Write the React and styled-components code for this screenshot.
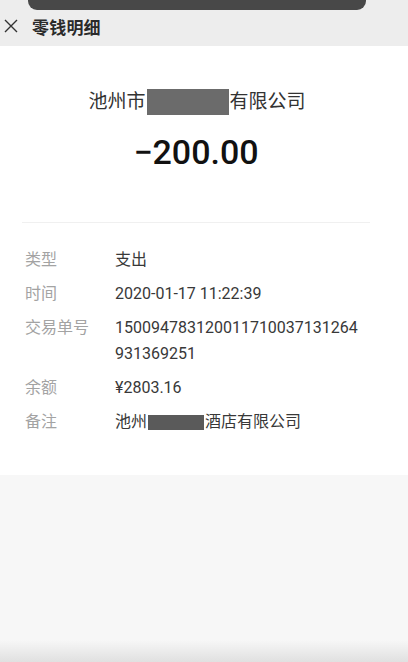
import React from 'react';
import styled, { createGlobalStyle } from 'styled-components';

const Global = createGlobalStyle`
    html, body {
        margin: 0;
        padding: 0;
        background: #f7f7f7;
    }
    body {
        font-family: Roboto, "Noto Sans CJK SC", sans-serif;
    }
`;

const filas = [
    { etiqueta: '类型', valor: '支出' },
    { etiqueta: '时间', valor: '2020-01-17 11:22:39' },
    { etiqueta: '交易单号', valor: '150094783120011710037131264931369251' },
    { etiqueta: '余额', valor: '¥2803.16' },
];

export default function App() {
    return (
        <>
            <Global />
            <Pagina>
                <Encabezado>
                    <Notificacion />
                    <BotonCerrar>
                        <svg width="14" height="14" viewBox="0 0 14 14">
                            <path d="M1 1 L13 13 M13 1 L1 13" stroke="#333" strokeWidth="1.4" fill="none" />
                        </svg>
                    </BotonCerrar>
                    <Titulo>零钱明细</Titulo>
                </Encabezado>
                <Tarjeta>
                    <Empresa>
                        池州市<Tachado $ancho={82} $alto={26} $color="#6b6b6b" />有限公司
                    </Empresa>
                    <Monto>−200.00</Monto>
                    <Divisor />
                    <Lista>
                        {filas.map((f) => (
                            <Fila key={f.etiqueta}>
                                <Etiqueta>{f.etiqueta}</Etiqueta>
                                <Valor>{f.valor}</Valor>
                            </Fila>
                        ))}
                        <Fila>
                            <Etiqueta>备注</Etiqueta>
                            <Valor>
                                池州<Tachado $ancho={56} $alto={15} $color="#5a5a5a" />酒店有限公司
                            </Valor>
                        </Fila>
                    </Lista>
                </Tarjeta>
                <Relleno />
            </Pagina>
        </>
    );
}

const Pagina = styled.div`
    width: 408px;
    height: 662px;
    display: flex;
    flex-direction: column;
    overflow: hidden;
`;

const Encabezado = styled.div`
    position: relative;
    height: 46px;
    flex-shrink: 0;
    background: #ededed;
    display: flex;
    align-items: center;
    padding-left: 4px;
    box-sizing: border-box;
`;

const Notificacion = styled.div`
    position: absolute;
    top: 0;
    left: 28px;
    width: 338px;
    height: 10px;
    background: #484848;
    border-radius: 0 0 9px 9px;
`;

const BotonCerrar = styled.div`
    width: 14px;
    height: 14px;
    display: flex;
    margin-top: 6px;
`;

const Titulo = styled.h1`
    margin: 6px 0 0 14px;
    font-size: 17px;
    font-weight: 700;
    color: #2a2a2a;
    letter-spacing: 0.2px;
`;

const Tarjeta = styled.div`
    background: #ffffff;
    padding: 43px 0 40px;
    display: flex;
    flex-direction: column;
`;

const Empresa = styled.div`
    font-size: 19px;
    line-height: 26px;
    color: #333;
    display: flex;
    justify-content: center;
    align-items: center;
    padding-right: 14px;
`;

const Tachado = styled.span`
    display: inline-block;
    width: ${(p) => p.$ancho}px;
    height: ${(p) => p.$alto}px;
    background: ${(p) => p.$color};
    margin: 0 1px;
`;

const Monto = styled.div`
    margin-top: 17px;
    padding-right: 16px;
    text-align: center;
    font-size: 34px;
    line-height: 40px;
    font-weight: 500;
    color: #111;
`;

const Divisor = styled.div`
    margin: 50px 38px 0 22px;
    height: 1px;
    background: #f0f0f0;
`;

const Lista = styled.div`
    margin-top: 24px;
    display: flex;
    flex-direction: column;
    gap: 8px;
`;

const Fila = styled.div`
    display: flex;
    font-size: 16px;
    line-height: 26px;
`;

const Etiqueta = styled.div`
    width: 90px;
    padding-left: 25px;
    flex-shrink: 0;
    color: #a3a3a3;
`;

const Valor = styled.div`
    width: 250px;
    color: #383838;
    word-break: break-all;
    display: flex;
    align-items: center;
    flex-wrap: wrap;
`;

const Relleno = styled.div`
    flex: 1;
    background: linear-gradient(to bottom, #f7f7f7 0, #f7f7f7 165px, #e0e0e0 100%);
`;
